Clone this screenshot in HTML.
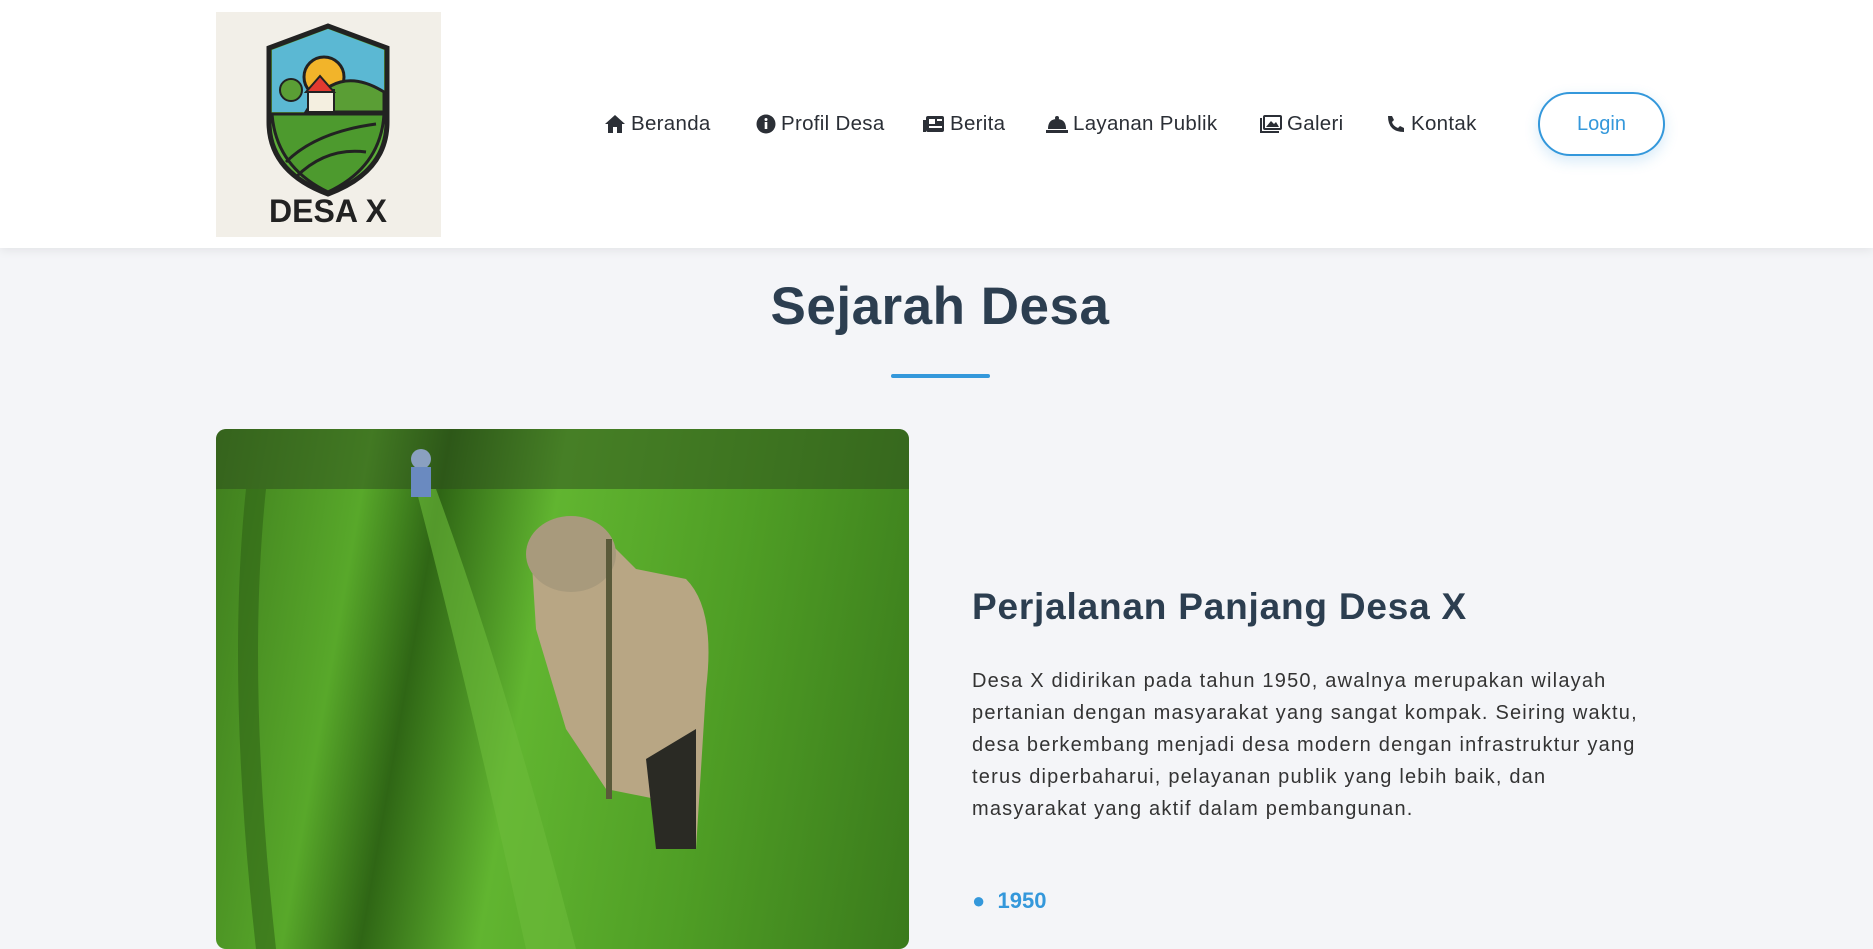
<!DOCTYPE html>
<html><head><meta charset="utf-8"><style>
*{margin:0;padding:0;box-sizing:border-box}
body{width:1873px;height:898px;overflow:hidden;background:#f4f5f8;font-family:"Liberation Sans",sans-serif;position:relative}
header{position:absolute;left:0;top:0;width:1873px;height:248px;background:#fff;box-shadow:0 2px 10px rgba(0,0,0,.08)}
.logo{position:absolute;left:216px;top:12px;width:225px;height:225px;background:#f2efe8}
nav span{position:absolute;top:112px;display:inline-flex;align-items:center;white-space:nowrap;font-size:20.5px;color:#2b2f36;letter-spacing:.3px}
nav svg{margin-right:5px}
.login{position:absolute;left:1538px;top:92px;width:127px;height:64px;border:2px solid #3498db;border-radius:32px;color:#3498db;font-size:20px;display:flex;align-items:center;justify-content:center;box-shadow:0 5px 14px rgba(52,152,219,.2);background:#fff}
h1{position:absolute;top:276px;left:0;width:1880px;text-align:center;font-size:53px;color:#2c3e50;font-weight:bold;letter-spacing:.5px}
.bar{position:absolute;left:891px;top:374px;width:99px;height:4px;background:#3498db;border-radius:2px}
.img{position:absolute;left:216px;top:429px;width:693px;height:520px;border-radius:10px;overflow:hidden;background:linear-gradient(100deg,#3f7d1e 0%,#58a82a 20%,#2f6615 30%,#61b530 45%,#4f9e25 70%,#3a7a1c 100%)}
h2{position:absolute;left:972px;top:586px;font-size:37px;color:#2c3e50;font-weight:bold;letter-spacing:.8px}
p{position:absolute;left:972px;top:665px;width:760px;font-size:20px;line-height:32px;color:#333;letter-spacing:1.2px;white-space:nowrap}
.yr{position:absolute;left:972px;top:888px;font-size:22px;color:#3498db;font-weight:bold}
</style></head><body>
<header>
<div class="logo"><svg width="225" height="225" viewBox="0 0 225 225">
<path d="M53 36 L112 14 L171 36 L171 110 Q171 160 112 182 Q53 160 53 110 Z" fill="#5dae3a" stroke="#222" stroke-width="5"/>
<path d="M56 38 L112 17 L168 38 L168 100 L56 100 Z" fill="#5bb8d3"/>
<circle cx="108" cy="65" r="20" fill="#f2b42a" stroke="#222" stroke-width="3"/>
<path d="M90 100 Q120 50 168 80 L168 100 Z" fill="#5a9e35" stroke="#222" stroke-width="3"/>
<rect x="92" y="78" width="26" height="22" fill="#f4efe0" stroke="#222" stroke-width="2"/>
<path d="M90 80 L104 64 L118 80 Z" fill="#e23a30" stroke="#222" stroke-width="2"/>
<circle cx="75" cy="78" r="11" fill="#5a9e35" stroke="#222" stroke-width="2"/>
<path d="M56 102 L168 102 Q165 155 112 180 Q60 155 56 102Z" fill="#4d9a2e" stroke="#222" stroke-width="3"/>
<path d="M70 150 Q100 120 160 112 M80 165 Q110 135 150 140" stroke="#222" stroke-width="3" fill="none"/>
<text x="112" y="210" text-anchor="middle" font-family="Liberation Sans" font-weight="bold" font-size="32" fill="#222">DESA X</text>
</svg></div>
<nav>
<span style="left:604px"><svg width="22" height="20" viewBox="0 0 22 20"><path d="M11 1 L21 10 H18 V19 H13 V13 H9 V19 H4 V10 H1 Z" fill="#2b2f36"/></svg>Beranda</span>
<span style="left:756px"><svg width="20" height="20"><circle cx="10" cy="10" r="9.5" fill="#2b2f36"/><rect x="8.7" y="8" width="2.6" height="7" fill="#fff"/><circle cx="10" cy="5.5" r="1.5" fill="#fff"/></svg>Profil Desa</span>
<span style="left:923px"><svg width="22" height="18"><rect x="3" y="1" width="18" height="16" rx="2" fill="#2b2f36"/><rect x="6" y="4" width="6" height="5" fill="#fff"/><rect x="14" y="4" width="5" height="2" fill="#fff"/><rect x="6" y="11" width="13" height="2" fill="#fff"/><rect x="0" y="5" width="3" height="12" fill="#2b2f36"/></svg>Berita</span>
<span style="left:1046px"><svg width="22" height="18"><path d="M2 14 Q2 4 11 4 Q20 4 20 14 Z" fill="#2b2f36"/><rect x="0" y="15" width="22" height="3" fill="#2b2f36"/><circle cx="11" cy="3" r="2" fill="#2b2f36"/></svg>Layanan Publik</span>
<span style="left:1260px"><svg width="22" height="18"><rect x="3" y="0" width="19" height="15" rx="2" fill="#2b2f36"/><rect x="5" y="2" width="15" height="11" fill="#fff"/><path d="M6 12 L11 6 L14 9 L16 7 L19 12Z" fill="#2b2f36"/><path d="M1 3 V17 H19" stroke="#2b2f36" stroke-width="2" fill="none"/></svg>Galeri</span>
<span style="left:1386px"><svg width="20" height="20" viewBox="0 0 20 20"><path d="M18 14 L14 12 L12 14 Q7 12 6 8 L8 6 L6 2 L2 2 Q2 18 18 18 Z" fill="#2b2f36"/></svg>Kontak</span>
</nav>
<div class="login">Login</div>
</header>
<h1>Sejarah Desa</h1>
<div class="bar"></div>
<div class="img"><svg width="693" height="520">
<rect width="693" height="60" fill="#2c4a1c" opacity=".5"/>
<path d="M200 60 Q250 250 310 520 L360 520 Q290 250 220 60Z" fill="#6dbb3a" opacity=".6"/>
<path d="M30 60 Q10 250 40 520 L60 520 Q30 250 50 60Z" fill="#2a5a14" opacity=".5"/>
<path d="M315 120 Q350 95 390 110 L420 140 L470 150 Q500 180 490 260 L480 420 L450 420 L440 370 L390 360 L350 300 L320 200 Z" fill="#b8a684"/>
<ellipse cx="355" cy="125" rx="45" ry="38" fill="#a89a7c"/>
<path d="M430 330 L480 300 L480 420 L440 420Z" fill="#2a2a24"/>
<rect x="390" y="110" width="6" height="260" fill="#5a5a3a"/>
<circle cx="205" cy="30" r="10" fill="#8aa0c0"/><rect x="195" y="38" width="20" height="30" fill="#6a8ac0"/>
</svg></div>
<h2>Perjalanan Panjang Desa X</h2>
<p>Desa X didirikan pada tahun 1950, awalnya merupakan wilayah<br>pertanian dengan masyarakat yang sangat kompak. Seiring waktu,<br>desa berkembang menjadi desa modern dengan infrastruktur yang<br>terus diperbaharui, pelayanan publik yang lebih baik, dan<br>masyarakat yang aktif dalam pembangunan.</p>
<div class="yr">● &nbsp;1950</div>
</body></html>
